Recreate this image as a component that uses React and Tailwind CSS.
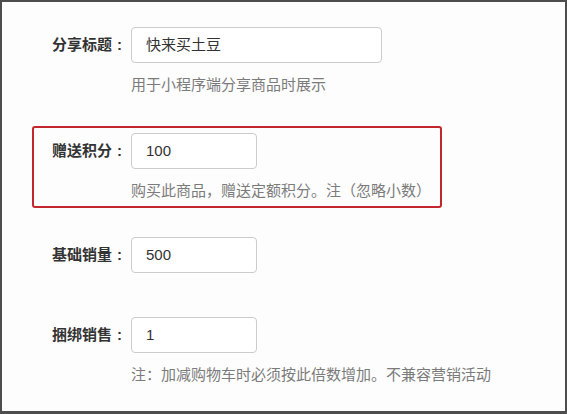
export default function App() {
  const rows = [
    { label: '分享标题', value: '快来买土豆', wide: true, help: '用于小程序端分享商品时展示', mt: 'mt-[18px]' },
    { label: '赠送积分', value: '100', help: '购买此商品，赠送定额积分。注（忽略小数）', mt: 'mt-[24px]', active: true },
    { label: '基础销量', value: '500', mt: 'mt-[22px]' },
    { label: '捆绑销售', value: '1', help: '注：加减购物车时必须按此倍数增加。不兼容营销活动', mt: 'mt-[30px]' },
  ]

  return (
    <div className="w-[567px] h-[414px] overflow-hidden bg-[#fdfdfd] border-2 border-b-[3px] border-[#4d4d4d] pl-[30px] font-['Liberation_Sans','Noto_Sans_CJK_SC',sans-serif]">
      {rows.map((row) => (
        <div
          key={row.label}
          className={`${row.mt} w-[410px] border-2 rounded-[3px] pt-[5px] pb-[5px] ${row.active ? 'border-[#c4262e]' : 'border-transparent'}`}
        >
          {/* field */}
          <div className="flex items-center">
            <label className="w-[93px] mr-[4px] text-right text-[15px] font-bold text-[#333]">
              {row.label}
              <span className="inline-block w-[15px] text-center">:</span>
            </label>
            <div
              className={`${row.wide ? 'w-[251px]' : 'w-[126px]'} h-[36px] flex items-center px-[14px] border border-[#cccccc] rounded-[4px] bg-white text-[15px] text-[#333]`}
            >
              {row.value}
            </div>
          </div>
          {/* help text */}
          {row.help && (
            <p className="mt-[12px] ml-[97px] text-[15px] leading-[20px] text-[#7b7b7b] whitespace-nowrap">
              {row.help}
            </p>
          )}
        </div>
      ))}
    </div>
  )
}
